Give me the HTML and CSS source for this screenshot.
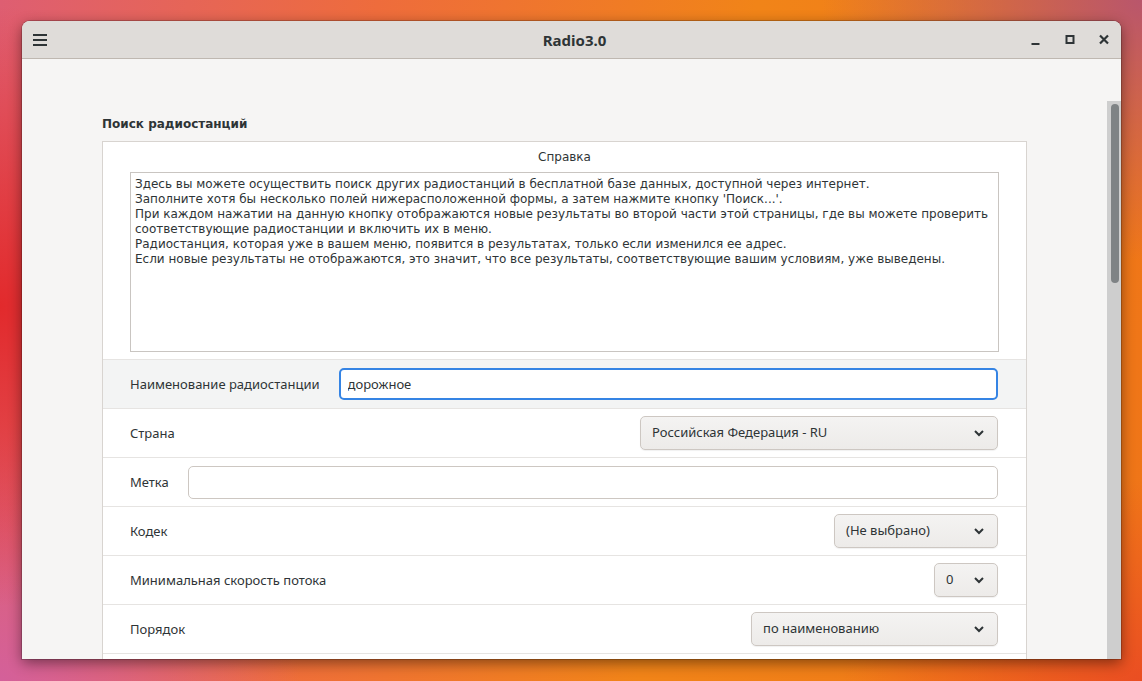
FILE: index.html
```html
<!DOCTYPE html>
<html lang="ru">
<head>
    <meta charset="UTF-8">
    <title>Radio3.0</title>
    <link rel="stylesheet" href="styles.css">
</head>
<body>

<div class="window">
    <!-- Заголовок окна -->
    <div class="headerbar">
        <button class="hb-btn menu-btn" title="Меню">
            <svg width="16" height="16" viewBox="0 0 16 16"><path d="M1 3h14M1 8h14M1 13h14" stroke="#2e3436" stroke-width="2"/></svg>
        </button>
        <div class="title">Radio3.0</div>
        <div class="controls">
            <button class="hb-btn"><svg width="16" height="16" viewBox="0 0 16 16"><path d="M3.5 12h8" stroke="#2e3436" stroke-width="2"/></svg></button>
            <button class="hb-btn"><svg width="16" height="16" viewBox="0 0 16 16"><rect x="4.5" y="4" width="7" height="7" fill="none" stroke="#2e3436" stroke-width="2"/></svg></button>
            <button class="hb-btn"><svg width="16" height="16" viewBox="0 0 16 16"><path d="M4 3.5l8 8M12 3.5l-8 8" stroke="#2e3436" stroke-width="2.2"/></svg></button>
        </div>
    </div>

    <div class="content">
        <div class="page">
            <h2 class="heading">Поиск радиостанций</h2>

            <div class="frame">
                <div class="frame-title">Справка</div>
                <div class="helpview">Здесь вы можете осуществить поиск других радиостанций в бесплатной базе данных, доступной через интернет.
Заполните хотя бы несколько полей нижерасположенной формы, а затем нажмите кнопку 'Поиск...'.
При каждом нажатии на данную кнопку отображаются новые результаты во второй части этой страницы, где вы можете проверить соответствующие радиостанции и включить их в меню.
Радиостанция, которая уже в вашем меню, появится в результатах, только если изменился ее адрес.
Если новые результаты не отображаются, это значит, что все результаты, соответствующие вашим условиям, уже выведены.</div>

                <div class="row row-active">
                    <label for="name">Наименование радиостанции</label>
                    <input type="text" id="name" class="entry entry-focus" value="дорожное">
                </div>
                <div class="row">
                    <label>Страна</label>
                    <div class="dropdown w-country"><span>Российская Федерация - RU</span><svg width="12" height="8" viewBox="0 0 12 8"><path d="M2 2l4 4 4-4" fill="none" stroke="#2e3436" stroke-width="2"/></svg></div>
                </div>
                <div class="row">
                    <label for="tag">Метка</label>
                    <input type="text" id="tag" class="entry">
                </div>
                <div class="row">
                    <label>Кодек</label>
                    <div class="dropdown w-codec"><span>(Не выбрано)</span><svg width="12" height="8" viewBox="0 0 12 8"><path d="M2 2l4 4 4-4" fill="none" stroke="#2e3436" stroke-width="2"/></svg></div>
                </div>
                <div class="row">
                    <label>Минимальная скорость потока</label>
                    <div class="dropdown w-bitrate"><span>0</span><svg width="12" height="8" viewBox="0 0 12 8"><path d="M2 2l4 4 4-4" fill="none" stroke="#2e3436" stroke-width="2"/></svg></div>
                </div>
                <div class="row">
                    <label>Порядок</label>
                    <div class="dropdown w-order"><span>по наименованию</span><svg width="12" height="8" viewBox="0 0 12 8"><path d="M2 2l4 4 4-4" fill="none" stroke="#2e3436" stroke-width="2"/></svg></div>
                </div>
                <div class="row"></div>
            </div>
        </div>

        <!-- полоса прокрутки -->
        <div class="scrollbar"><div class="slider"></div></div>
    </div>
</div>

</body>
</html>
```

FILE: styles.css
```css
html, body {
    height: 100%;
}
body {
    margin: 0;
    padding: 21px 0 0 22px;
    box-sizing: border-box;
    overflow: hidden;
    font-family: "Noto Sans", sans-serif;
    color: #2e3436;
    background:
        radial-gradient(ellipse 260px 300px at 0% 45%, #e22a2c 0%, rgba(226, 42, 44, 0) 100%),
        radial-gradient(ellipse 300px 260px at 0% 100%, #d4609a 0%, rgba(212, 96, 154, 0) 100%),
        radial-gradient(ellipse 320px 260px at 100% 0%, #b9566c 0%, rgba(185, 86, 108, 0) 100%),
        radial-gradient(ellipse 300px 200px at 100% 100%, #ea4e22 0%, rgba(234, 78, 34, 0) 100%),
        linear-gradient(100deg, #de5e72 0%, #ee6c3c 30%, #f18418 60%, #ef7418 100%);
}
.window {
    width: 1099px;
    height: 638px;
    border-radius: 8px 8px 0 0;
    overflow: hidden;
    background: #f6f5f4;
    box-shadow: 0 0 0 1px rgba(0, 0, 0, 0.18), 0 4px 14px rgba(0, 0, 0, 0.45);
    display: flex;
    flex-direction: column;
}
.headerbar {
    height: 37px;
    flex: none;
    background: #dfdcd9;
    border-bottom: 1px solid #bfb8b1;
    display: flex;
    align-items: center;
    padding: 0 0 0 3px;
}
.hb-btn {
    width: 34px;
    height: 28px;
    border: none;
    background: none;
    padding: 0;
    display: flex;
    align-items: center;
    justify-content: center;
}
.menu-btn {
    width: 30px;
}
.title {
    flex: 1;
    text-align: center;
    font-weight: bold;
    font-size: 15px;
    padding-left: 75px;
}
.controls {
    display: flex;
}
.content {
    flex: 1;
    position: relative;
    overflow: hidden;
}
.page {
    padding: 56px 94px 0 80px;
}
.heading {
    font-family: "DejaVu Sans", sans-serif;
    font-size: 12px;
    font-weight: bold;
    line-height: 18px;
    margin: 0 0 8px 0;
}
.frame {
    background: #ffffff;
    border: 1px solid #d8d4d0;
}
.frame-title {
    font-family: "DejaVu Sans", sans-serif;
    font-size: 12px;
    line-height: 18px;
    text-align: center;
    padding-top: 6px;
}
.helpview {
    margin: 6px 27px 7px 27px;
    border: 1px solid #c9c5c1;
    padding: 4px 4px;
    box-sizing: border-box;
    height: 180px;
    white-space: pre-wrap;
    font-family: "DejaVu Sans", sans-serif;
    font-size: 12px;
    line-height: 15px;
}
.row {
    height: 48px;
    border-top: 1px solid #e6e4e2;
    padding: 0 28px 0 27px;
    display: flex;
    align-items: center;
    gap: 19px;
    font-size: 13px;
}
.row label {
    flex: none;
}
.row-active {
    background: #f3f4f4;
}
.entry {
    flex: 1;
    height: 33px;
    box-sizing: border-box;
    border: 1px solid #cdc7c2;
    border-radius: 5px;
    background: #ffffff;
    padding: 0 8px;
    font-family: "Noto Sans", sans-serif;
    font-size: 13px;
    color: #2e3436;
    outline: none;
}
.entry-focus {
    border: 2px solid #3584e4;
    padding: 0 7px;
    height: 32px;
}
.dropdown {
    margin-left: auto;
    height: 34px;
    box-sizing: border-box;
    border: 1px solid #cdc7c2;
    border-radius: 5px;
    background: linear-gradient(#f4f3f2, #edebe9);
    box-shadow: 0 1px 1px rgba(0, 0, 0, 0.06);
    display: flex;
    align-items: center;
    justify-content: space-between;
    padding: 0 12px 0 11px;
}
.dropdown span {
    margin-top: -2px;
}
.w-country { width: 358px; }
.w-codec { width: 164px; }
.w-bitrate { width: 64px; }
.w-order { width: 247px; }
.scrollbar {
    position: absolute;
    right: 0;
    top: 42px;
    bottom: 0;
    width: 14px;
    background: #cecece;
}
.slider {
    position: absolute;
    top: 3px;
    left: 4px;
    width: 8px;
    height: 179px;
    border-radius: 4px;
    background: #7f8385;
}
```
